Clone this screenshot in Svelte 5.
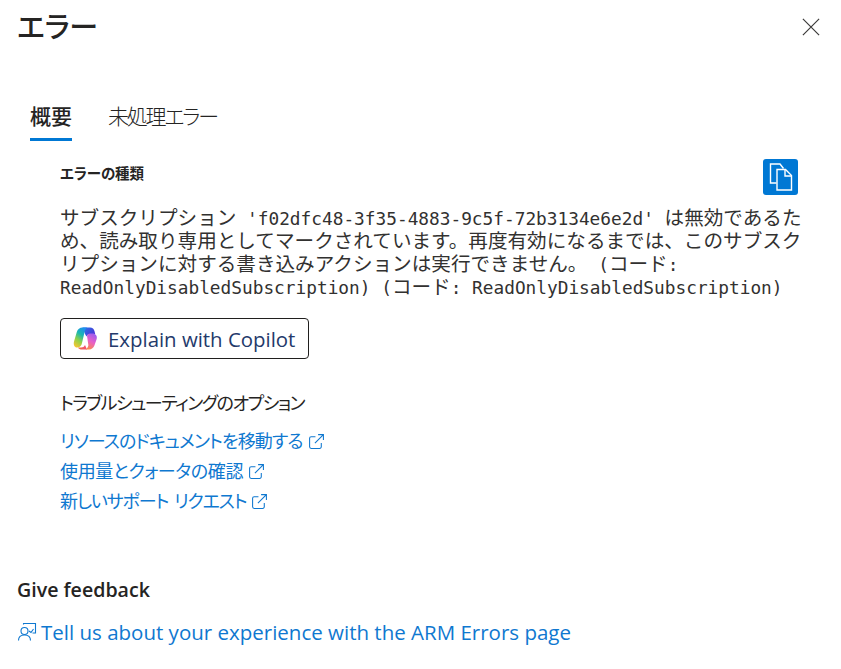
<script lang="ts">
	// Error details blade: overview tab, message, troubleshooting links and feedback
	const links = [
		{ label: 'リソースのドキュメントを移動する', spacing: -0.9 },
		{ label: '使用量とクォータの確認', spacing: -0.35 },
		{ label: '新しいサポート リクエスト', spacing: -1.15 }
	];
</script>

{#snippet external()}
	<svg class="ext" viewBox="0 0 16 16" width="17" height="17" fill="none" stroke="currentColor" stroke-width="1">
		<path d="M7 3.500H3a1.500 1.500 0 0 0-1.500 1.500v8A1.500 1.500 0 0 0 3 14.500h8a1.500 1.500 0 0 0 1.500-1.500V9.500" />
		<path d="M9.500 1.500h5v5M14.500 1.500 6.500 9.500" />
	</svg>
{/snippet}

<div class="blade">
	<header class="header">
		<h1 class="title">エラー</h1>
		<button class="close" aria-label="閉じる">
			<svg viewBox="0 0 20 20" width="20" height="20" fill="none" stroke="#3b3a39" stroke-width="1.3">
				<path d="M1 1l18 18M19 1 1 19" />
			</svg>
		</button>
	</header>

	<nav class="tabs">
		<span class="tab active">概要</span>
		<span class="tab">未処理エラー</span>
	</nav>

	<section class="content">
		<div class="type-row">
			<h2 class="type-label">エラーの種類</h2>
			<button class="copy" aria-label="コピー">
				<svg viewBox="0 0 24 28" width="24" height="28" fill="none" stroke="#fff" stroke-width="1.400">
					<path d="M7.500 20H1.500V1h9.500l3.500 4.500" />
					<path d="M8 6.500h8.500l6 6V27H8z" />
					<path d="M16 6.500v6.500h6.500" />
				</svg>
			</button>
		</div>

		<p class="message">サブスクリプション<code>{" 'f02dfc48-3f35-4883-9c5f-72b3134e6e2d' "}</code>は無効であるため、読み取り専用としてマークされています。再度有効になるまでは、このサブスクリプションに対する書き込みアクションは実行できません。<code>{" ("}</code>コード<code>{": ReadOnlyDisabledSubscription) ("}</code>コード<code>{": ReadOnlyDisabledSubscription)"}</code></p>

		<button class="copilot">
			<svg viewBox="0 0 25 25" width="25" height="25">
				<defs>
					<linearGradient id="cpA" x1="0.7" y1="0" x2="0.2" y2="1">
						<stop offset="0" stop-color="#1c8df0" />
						<stop offset="0.35" stop-color="#19b8b0" />
						<stop offset="0.65" stop-color="#8fd14a" />
						<stop offset="1" stop-color="#f7c531" />
					</linearGradient>
					<linearGradient id="cpB" x1="0.7" y1="0" x2="0.3" y2="1">
						<stop offset="0" stop-color="#9a5cf0" />
						<stop offset="0.5" stop-color="#e860c8" />
						<stop offset="1" stop-color="#fb8a4a" />
					</linearGradient>
					<linearGradient id="cpC" x1="0" y1="0" x2="1" y2="0.6">
						<stop offset="0" stop-color="#2a7bea" />
						<stop offset="1" stop-color="#4a34d6" />
					</linearGradient>
					<linearGradient id="cpD" x1="0" y1="0" x2="1" y2="0">
						<stop offset="0" stop-color="#f5703a" />
						<stop offset="1" stop-color="#f04e7c" />
					</linearGradient>
				</defs>
				<path fill="url(#cpC)" d="M9.500 1.500H17c2.500 0 4 1.500 4.600 4l.6 2.500H18c-2.500 0-3.800.8-4.500 2.500L12 8z" />
				<path fill="url(#cpD)" d="M5 21.500h3c2 0 3.300-.8 4-2.500l2 4.500H9c-2 0-3.300-.5-4-2z" />
				<path fill="url(#cpA)" d="M9.500 1.500h5c-1.500.6-2.300 2-2.700 3.500L9 17c-.6 2.800-2 4.500-5 4.500C1.500 21.500.2 18.800 1 15.500L3.800 6c.9-3 3-4.500 5.700-4.500z" />
				<path fill="url(#cpB)" d="M17 7.500h2.500c3.200 0 5.100 2.600 4.100 5.800l-2.100 5.900c-.9 2.500-2.800 4.300-5.500 4.300h-3.500c1.600-.8 2.400-2.200 2.900-4.200L14 10c.4-1.500 1.500-2.500 3-2.500z" />
			</svg>
			<span>Explain with Copilot</span>
		</button>

		<h3 class="options-title">トラブルシューティングのオプション</h3>
		<ul class="links">
			{#each links as link}
				<li>
					<a href="#top"><span style="letter-spacing: {link.spacing}px">{link.label}</span>{@render external()}</a>
				</li>
			{/each}
		</ul>
	</section>

	<footer class="feedback">
		<h3 class="feedback-title">Give feedback</h3>
		<a class="feedback-link" href="#top">
			<svg viewBox="0 0 20 20" width="20" height="20" fill="none" stroke="currentColor" stroke-width="1.100">
				<circle cx="7.500" cy="9" r="3.500" />
				<path d="M1.500 18.500c0-3.500 2.500-5.500 6-5.500s6 2 6 5.500" />
				<path d="M6.500 2.500V1.500h12V11h-3M12 9l2 1.500 2.500-3.500" />
			</svg>
			<span>Tell us about your experience with the ARM Errors page</span>
		</a>
	</footer>
</div>

<style>
	:global(body) {
		margin: 0;
		background: #fff;
	}

	.blade {
		width: 841px;
		height: 669px;
		overflow: hidden;
		font-family: "Noto Sans CJK JP", "Noto Sans", sans-serif;
		font-feature-settings: "palt";
		color: #252423;
		box-sizing: border-box;
	}

	.header {
		display: flex;
		justify-content: space-between;
		align-items: flex-start;
		padding: 4px 21px 0 17px;
		height: 94px;
		box-sizing: border-box;
	}

	.title {
		margin: 0;
		font-size: 29px;
		line-height: 42px;
		font-weight: 500;
		letter-spacing: -0.2px;
	}

	.close {
		border: 0;
		background: none;
		padding: 0;
		margin-top: 14px;
		width: 18px;
		height: 18px;
		line-height: 0;
	}

	.close svg {
		width: 18px;
		height: 18px;
	}

	.tabs {
		display: flex;
		gap: 36px;
		padding-left: 30px;
		height: 47px;
	}

	.tab {
		font-size: 21px;
		line-height: 42px;
		height: 47px;
		box-sizing: border-box;
		font-weight: 300;
		letter-spacing: -2.2px;
	}

	.tab.active {
		font-weight: 500;
		border-bottom: 3px solid #0078d4;
		letter-spacing: 0;
	}

	.content {
		padding: 18px 43px 0 60px;
	}

	.type-row {
		display: flex;
		justify-content: space-between;
		align-items: flex-start;
		height: 46px;
	}

	.type-label {
		margin: 0;
		font-size: 14.500px;
		line-height: 28px;
		font-weight: 700;
		letter-spacing: -0.1px;
	}

	.copy {
		width: 35px;
		height: 36px;
		border: 0;
		border-radius: 3px;
		background: #0078d4;
		padding: 0;
		display: flex;
		align-items: center;
		justify-content: center;
	}

	.message {
		margin: 0;
		width: 745px;
		font-size: 19.600px;
		line-height: 23.100px;
		font-feature-settings: normal;
		color: #323130;
	}

	.message code {
		font-family: "DejaVu Sans Mono", monospace;
		font-size: 17.800px;
		line-height: 1;
		white-space: pre-wrap;
	}

	.copilot {
		display: flex;
		align-items: center;
		gap: 10px;
		width: 249px;
		height: 41px;
		margin: 21px 0 0;
		padding: 0 0 0 12px;
		box-sizing: border-box;
		background: #fff;
		border: 1px solid #201f1e;
		border-radius: 4px;
		color: #243a6b;
		font-family: "Open Sans", sans-serif;
		font-size: 20.400px;
		font-weight: 500;
	}

	.options-title {
		margin: 26px 0 0;
		font-size: 18px;
		line-height: 34px;
		font-weight: 400;
		letter-spacing: -1.5px;
	}

	.links {
		list-style: none;
		margin: 6px 0 0;
		padding: 0;
		word-spacing: 3px;
	}

	.links li {
		height: 30px;
		line-height: 30px;
		font-size: 18px;
	}

	.links a,
	.feedback-link {
		color: #0f78d0;
		text-decoration: none;
	}

	.ext {
		vertical-align: -2px;
		margin-left: 5px;
	}

	.feedback {
		padding: 60px 0 0 17px;
	}

	.feedback-title {
		margin: 0;
		font-family: "Open Sans", sans-serif;
		font-size: 19.600px;
		line-height: 30px;
		font-weight: 600;
	}

	.feedback-link {
		display: flex;
		align-items: center;
		gap: 4px;
		margin-top: 12px;
		font-family: "Open Sans", sans-serif;
		font-size: 20.500px;
		line-height: 30px;
	}
</style>
